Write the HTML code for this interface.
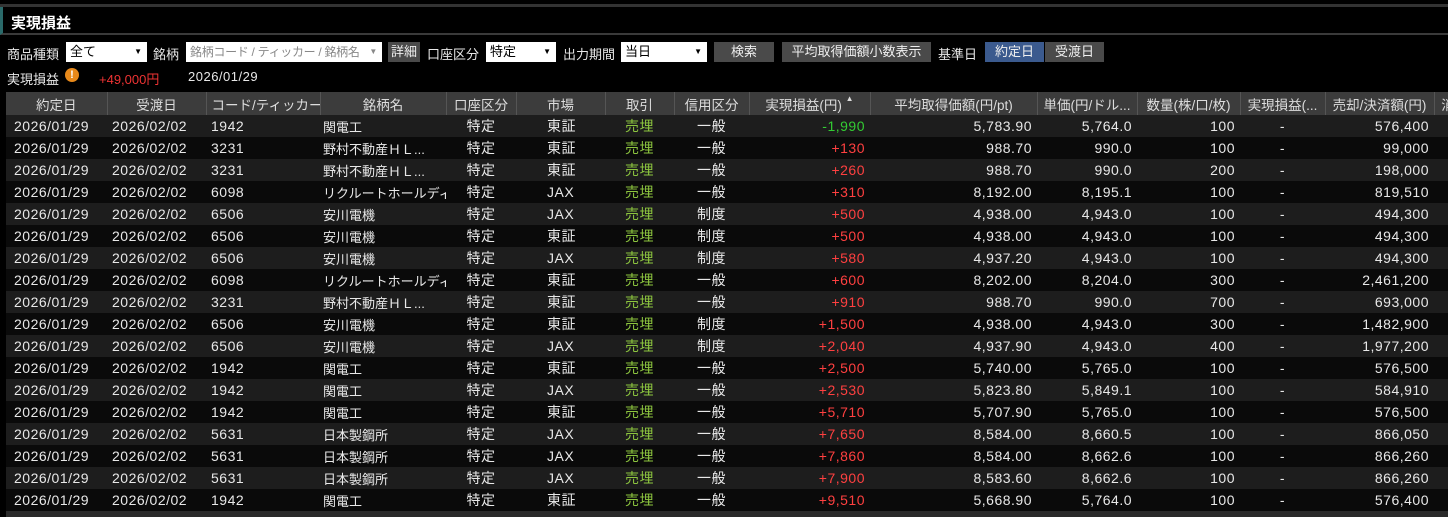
<!DOCTYPE html><html><head><meta charset="utf-8"><style>
body{margin:0;width:1448px;height:517px;background:#000;overflow:hidden;font-family:"Liberation Sans","Noto Sans CJK JP",sans-serif;font-size:13px;color:#e8e8e8;position:relative}
.topline{position:absolute;left:0;top:4px;width:1448px;height:3px;background:#333}
.title{position:absolute;left:0;top:7px;width:1448px;height:28px;border-left:3px solid #2a6a6a;border-bottom:2px solid #3a3a3a;box-sizing:border-box}
.title span{position:absolute;left:8px;top:5px;font-weight:bold;font-size:15px;color:#fff}
.a{position:absolute;white-space:nowrap}
.sel{position:absolute;background:#fff;color:#000;height:20px;box-sizing:border-box;padding:1px 4px;font-size:13px;line-height:18px;overflow:hidden;white-space:nowrap}
.sel:after{content:"▼";position:absolute;right:5px;top:1px;font-size:8px;background:#fff;padding-left:3px}
.btn{position:absolute;background:#4a4a4a;color:#eee;height:20px;line-height:20px;text-align:center;font-size:13px}
table{position:absolute;left:6px;top:92px;border-collapse:collapse;table-layout:fixed;width:1456px}
td,th{height:22px;padding:0 5px;white-space:nowrap;overflow:hidden;font-weight:normal;font-size:14px;letter-spacing:0.5px}
th{background:#3c3c3c;color:#ddd;border-right:1px solid #555;height:23px;font-size:13.5px;letter-spacing:0}
tr:nth-child(odd) td{background:#0a0a0a}
tr:nth-child(even) td{background:#1d1d1d}
td:nth-child(1){padding-left:8px}
td:nth-child(3){padding-left:5px}
td:nth-child(4){padding-left:3px;letter-spacing:0;font-size:13px}
td:nth-child(6){padding-left:31px}
.r{text-align:right}.c{text-align:center}.g{color:#8dc63f}.p{color:#ff4040}.gr{color:#3c3}
</style></head><body>
<div class="topline"></div>
<div class="title"><span>実現損益</span></div>
<div class="a" style="left:7px;top:44px">商品種類</div>
<div class="sel" style="left:66px;top:42px;width:81px">全て</div>
<div class="a" style="left:153px;top:44px">銘柄</div>
<div class="sel" style="left:186px;top:42px;width:196px;color:#888;font-size:12px;letter-spacing:-0.3px">銘柄コード / ティッカー / 銘柄名</div>
<div class="btn" style="left:388px;top:42px;width:32px">詳細</div>
<div class="a" style="left:427px;top:44px">口座区分</div>
<div class="sel" style="left:486px;top:42px;width:70px">特定</div>
<div class="a" style="left:563px;top:44px">出力期間</div>
<div class="sel" style="left:621px;top:42px;width:86px">当日</div>
<div class="btn" style="left:714px;top:42px;width:60px">検索</div>
<div class="btn" style="left:782px;top:42px;width:149px">平均取得価額小数表示</div>
<div class="a" style="left:938px;top:44px">基準日</div>
<div class="btn" style="left:985px;top:42px;width:59px;background:#3b5a8e">約定日</div>
<div class="btn" style="left:1045px;top:42px;width:59px">受渡日</div>
<div class="a" style="left:7px;top:69px">実現損益</div>
<div class="a" style="left:65px;top:68px;width:14px;height:14px;border-radius:50%;background:#e8891a;color:#fff;font-size:11px;font-weight:bold;text-align:center;line-height:14px">!</div>
<div class="a" style="left:99px;top:69px;color:#e33">+49,000円</div>
<div class="a" style="left:188px;top:69px;letter-spacing:0.5px">2026/01/29</div>
<table>
<colgroup><col style="width:101px"><col style="width:99px"><col style="width:114px"><col style="width:126px"><col style="width:70px"><col style="width:89px"><col style="width:69px"><col style="width:75px"><col style="width:121px"><col style="width:167px"><col style="width:100px"><col style="width:103px"><col style="width:85px"><col style="width:109px"><col style="width:28px"></colgroup>
<tr><th>約定日</th><th>受渡日</th><th>コード/ティッカー</th><th>銘柄名</th><th>口座区分</th><th>市場</th><th>取引</th><th>信用区分</th><th>実現損益(円) <span style="font-size:8px;vertical-align:top">▲</span></th><th>平均取得価額(円/pt)</th><th>単価(円/ドル...</th><th>数量(株/口/枚)</th><th>実現損益(...</th><th>売却/決済額(円)</th><th>消</th></tr>
<tr><td>2026/01/29</td><td>2026/02/02</td><td>1942</td><td>関電工</td><td class="c">特定</td><td>東証</td><td class="c g">売埋</td><td class="c">一般</td><td class="r gr">-1,990</td><td class="r">5,783.90</td><td class="r">5,764.0</td><td class="r">100</td><td class="c">-</td><td class="r">576,400</td><td></td></tr>
<tr><td>2026/01/29</td><td>2026/02/02</td><td>3231</td><td>野村不動産ＨＬ...</td><td class="c">特定</td><td>東証</td><td class="c g">売埋</td><td class="c">一般</td><td class="r p">+130</td><td class="r">988.70</td><td class="r">990.0</td><td class="r">100</td><td class="c">-</td><td class="r">99,000</td><td></td></tr>
<tr><td>2026/01/29</td><td>2026/02/02</td><td>3231</td><td>野村不動産ＨＬ...</td><td class="c">特定</td><td>東証</td><td class="c g">売埋</td><td class="c">一般</td><td class="r p">+260</td><td class="r">988.70</td><td class="r">990.0</td><td class="r">200</td><td class="c">-</td><td class="r">198,000</td><td></td></tr>
<tr><td>2026/01/29</td><td>2026/02/02</td><td>6098</td><td>リクルートホールディ...</td><td class="c">特定</td><td>JAX</td><td class="c g">売埋</td><td class="c">一般</td><td class="r p">+310</td><td class="r">8,192.00</td><td class="r">8,195.1</td><td class="r">100</td><td class="c">-</td><td class="r">819,510</td><td></td></tr>
<tr><td>2026/01/29</td><td>2026/02/02</td><td>6506</td><td>安川電機</td><td class="c">特定</td><td>JAX</td><td class="c g">売埋</td><td class="c">制度</td><td class="r p">+500</td><td class="r">4,938.00</td><td class="r">4,943.0</td><td class="r">100</td><td class="c">-</td><td class="r">494,300</td><td></td></tr>
<tr><td>2026/01/29</td><td>2026/02/02</td><td>6506</td><td>安川電機</td><td class="c">特定</td><td>東証</td><td class="c g">売埋</td><td class="c">制度</td><td class="r p">+500</td><td class="r">4,938.00</td><td class="r">4,943.0</td><td class="r">100</td><td class="c">-</td><td class="r">494,300</td><td></td></tr>
<tr><td>2026/01/29</td><td>2026/02/02</td><td>6506</td><td>安川電機</td><td class="c">特定</td><td>JAX</td><td class="c g">売埋</td><td class="c">制度</td><td class="r p">+580</td><td class="r">4,937.20</td><td class="r">4,943.0</td><td class="r">100</td><td class="c">-</td><td class="r">494,300</td><td></td></tr>
<tr><td>2026/01/29</td><td>2026/02/02</td><td>6098</td><td>リクルートホールディ...</td><td class="c">特定</td><td>東証</td><td class="c g">売埋</td><td class="c">一般</td><td class="r p">+600</td><td class="r">8,202.00</td><td class="r">8,204.0</td><td class="r">300</td><td class="c">-</td><td class="r">2,461,200</td><td></td></tr>
<tr><td>2026/01/29</td><td>2026/02/02</td><td>3231</td><td>野村不動産ＨＬ...</td><td class="c">特定</td><td>東証</td><td class="c g">売埋</td><td class="c">一般</td><td class="r p">+910</td><td class="r">988.70</td><td class="r">990.0</td><td class="r">700</td><td class="c">-</td><td class="r">693,000</td><td></td></tr>
<tr><td>2026/01/29</td><td>2026/02/02</td><td>6506</td><td>安川電機</td><td class="c">特定</td><td>東証</td><td class="c g">売埋</td><td class="c">制度</td><td class="r p">+1,500</td><td class="r">4,938.00</td><td class="r">4,943.0</td><td class="r">300</td><td class="c">-</td><td class="r">1,482,900</td><td></td></tr>
<tr><td>2026/01/29</td><td>2026/02/02</td><td>6506</td><td>安川電機</td><td class="c">特定</td><td>JAX</td><td class="c g">売埋</td><td class="c">制度</td><td class="r p">+2,040</td><td class="r">4,937.90</td><td class="r">4,943.0</td><td class="r">400</td><td class="c">-</td><td class="r">1,977,200</td><td></td></tr>
<tr><td>2026/01/29</td><td>2026/02/02</td><td>1942</td><td>関電工</td><td class="c">特定</td><td>東証</td><td class="c g">売埋</td><td class="c">一般</td><td class="r p">+2,500</td><td class="r">5,740.00</td><td class="r">5,765.0</td><td class="r">100</td><td class="c">-</td><td class="r">576,500</td><td></td></tr>
<tr><td>2026/01/29</td><td>2026/02/02</td><td>1942</td><td>関電工</td><td class="c">特定</td><td>JAX</td><td class="c g">売埋</td><td class="c">一般</td><td class="r p">+2,530</td><td class="r">5,823.80</td><td class="r">5,849.1</td><td class="r">100</td><td class="c">-</td><td class="r">584,910</td><td></td></tr>
<tr><td>2026/01/29</td><td>2026/02/02</td><td>1942</td><td>関電工</td><td class="c">特定</td><td>東証</td><td class="c g">売埋</td><td class="c">一般</td><td class="r p">+5,710</td><td class="r">5,707.90</td><td class="r">5,765.0</td><td class="r">100</td><td class="c">-</td><td class="r">576,500</td><td></td></tr>
<tr><td>2026/01/29</td><td>2026/02/02</td><td>5631</td><td>日本製鋼所</td><td class="c">特定</td><td>JAX</td><td class="c g">売埋</td><td class="c">一般</td><td class="r p">+7,650</td><td class="r">8,584.00</td><td class="r">8,660.5</td><td class="r">100</td><td class="c">-</td><td class="r">866,050</td><td></td></tr>
<tr><td>2026/01/29</td><td>2026/02/02</td><td>5631</td><td>日本製鋼所</td><td class="c">特定</td><td>JAX</td><td class="c g">売埋</td><td class="c">一般</td><td class="r p">+7,860</td><td class="r">8,584.00</td><td class="r">8,662.6</td><td class="r">100</td><td class="c">-</td><td class="r">866,260</td><td></td></tr>
<tr><td>2026/01/29</td><td>2026/02/02</td><td>5631</td><td>日本製鋼所</td><td class="c">特定</td><td>JAX</td><td class="c g">売埋</td><td class="c">一般</td><td class="r p">+7,900</td><td class="r">8,583.60</td><td class="r">8,662.6</td><td class="r">100</td><td class="c">-</td><td class="r">866,260</td><td></td></tr>
<tr><td>2026/01/29</td><td>2026/02/02</td><td>1942</td><td>関電工</td><td class="c">特定</td><td>東証</td><td class="c g">売埋</td><td class="c">一般</td><td class="r p">+9,510</td><td class="r">5,668.90</td><td class="r">5,764.0</td><td class="r">100</td><td class="c">-</td><td class="r">576,400</td><td></td></tr>
<tr><td colspan="15" style="background:#2a2a2a;height:6px"></td></tr>
</table>
</body></html>
